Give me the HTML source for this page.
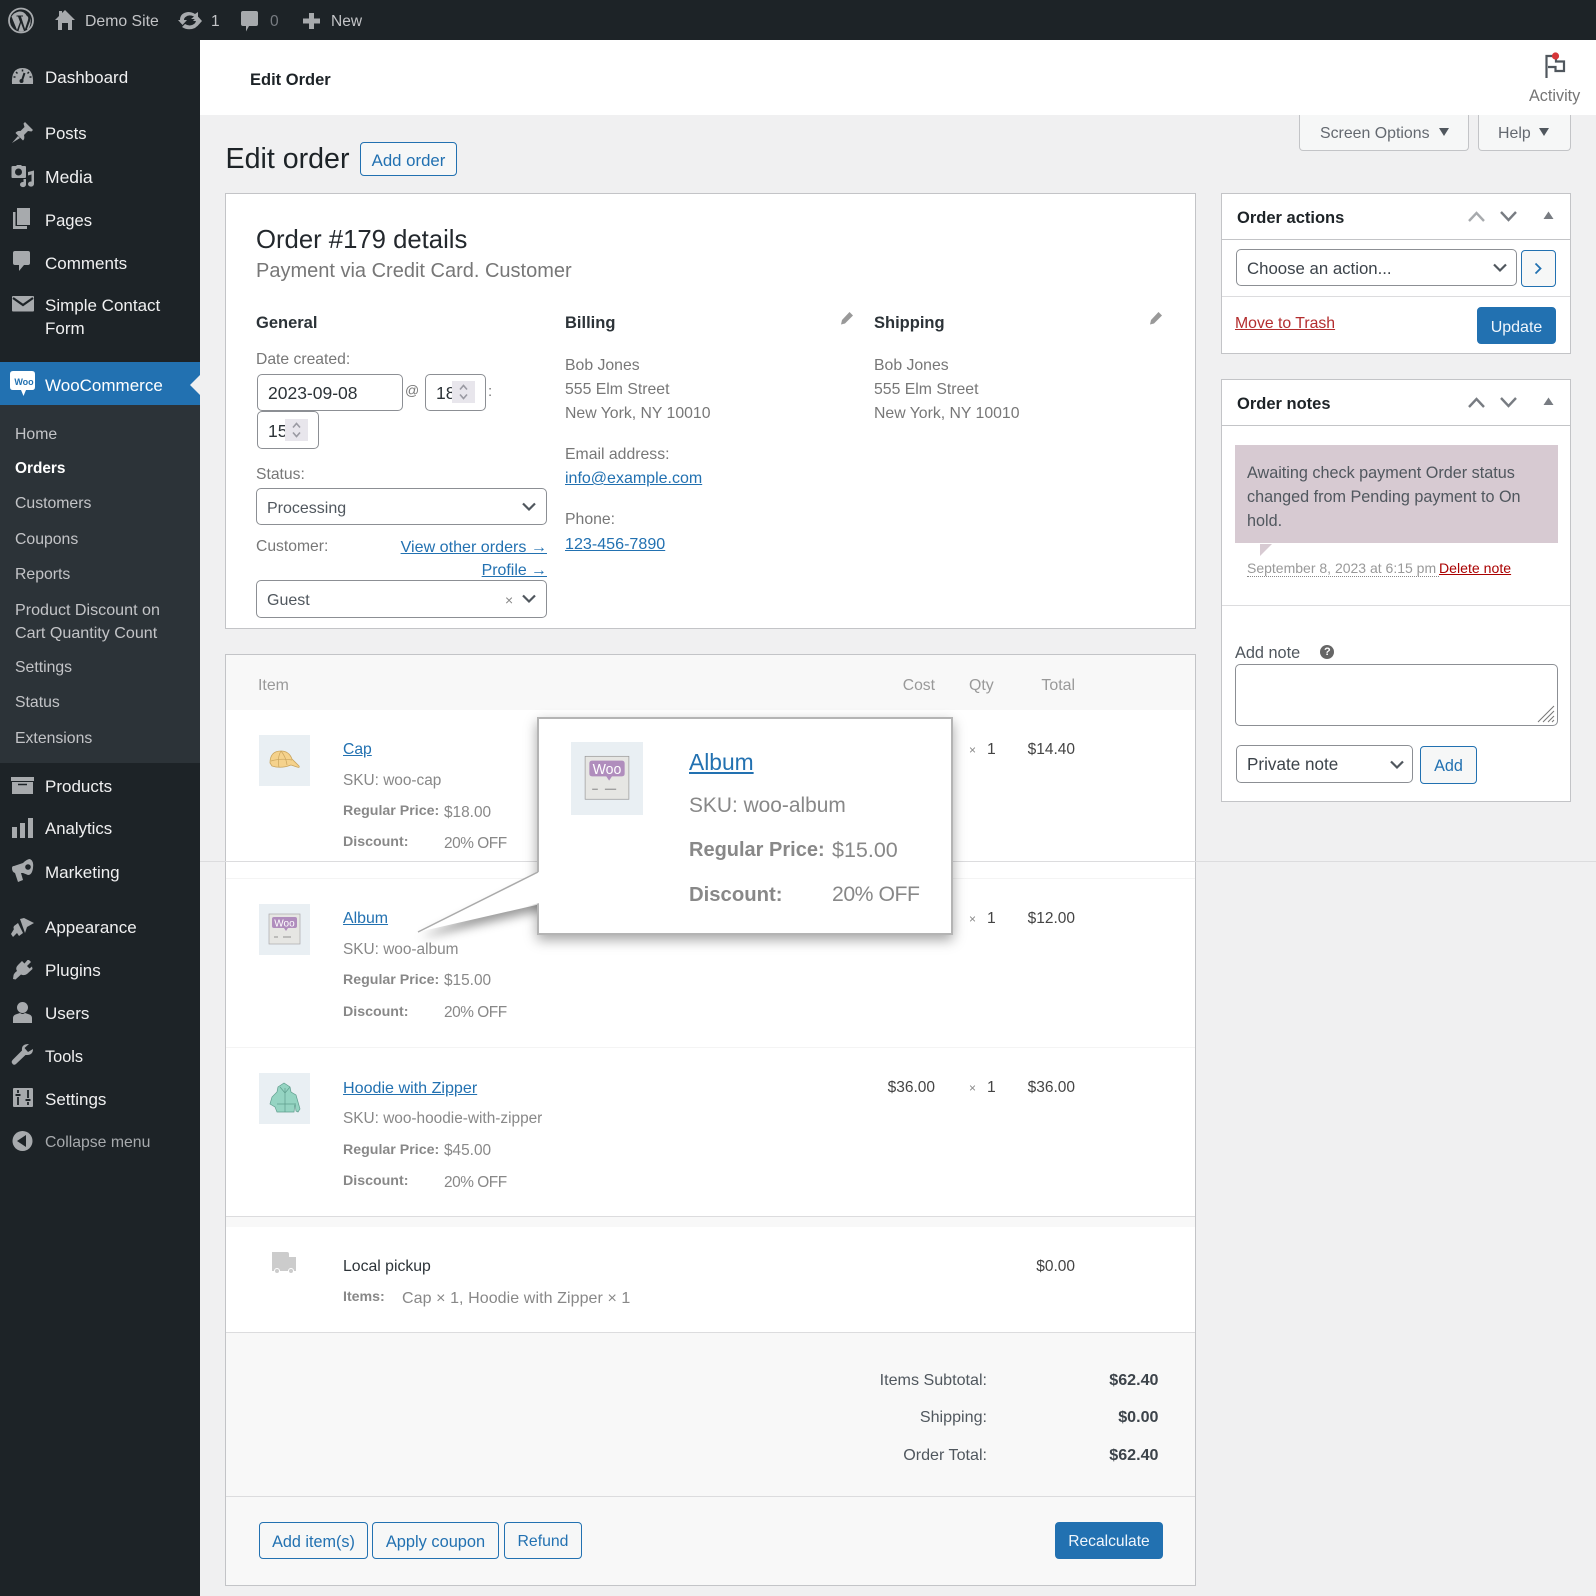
<!DOCTYPE html>
<html lang="en"><head><meta charset="utf-8"><title>Edit Order</title>
<style>
*{box-sizing:border-box}
html,body{margin:0;padding:0}
body{width:1596px;height:1596px;position:relative;overflow:hidden;background:#f0f0f1;font-family:"Liberation Sans",Arial,sans-serif;font-size:16px;color:#50575e}
.b{position:absolute}
.t{position:absolute;white-space:nowrap;line-height:24px;height:24px}
.m{font-size:17px;color:#f0f0f1;left:45px}
.sm{font-size:15.8px;color:#c3c4c7;left:15px}
.g{color:#777}
.lb{color:#888;font-weight:700;font-size:14.2px}
.v{color:#888;font-size:15.4px}
.o{letter-spacing:-.45px}
.h{font-weight:700;color:#2c3338;font-size:16.5px}
a{color:#2271b1;text-decoration:underline}
.inp{position:absolute;background:#fff;border:1px solid #8c8f94;border-radius:5px}
.btn{position:absolute;border:1px solid #2271b1;border-radius:4px;background:#f6f7f7;color:#2271b1;text-align:center;font-size:16.2px;line-height:38px;white-space:nowrap}
.pri{background:#2271b1;color:#f0f6fc}
.line{position:absolute;height:1px;background:#dcdcde}
svg{position:absolute;overflow:visible}
.ch{fill:none;stroke:#50575e;stroke-width:2.2}
</style></head><body>

<!-- admin bar + sidebar -->
<div class="b" style="left:0;top:0;width:1596px;height:40px;background:#1d2327"></div>
<div class="b" style="left:0;top:40px;width:200px;height:1556px;background:#1d2327"></div>
<div class="b" style="left:0;top:405px;width:200px;height:358px;background:#2c3338"></div>
<div class="b" style="left:0;top:362px;width:200px;height:43px;background:#2271b1"></div>

<!-- page header -->
<div class="b" style="left:200px;top:40px;width:1396px;height:75px;background:#fff"></div>

<!-- sidebar and toolbar icons -->
<svg style="left:0;top:0" width="200" height="1200" viewBox="0 0 200 1200" fill="#a7aaad">
<circle cx="21" cy="20.500" r="12" fill="none" stroke="#a7aaad" stroke-width="1.800"/>
<path d="M11.500 16.500 L17 30 L20 22 L18 16.500 H16.500 V15.500 H23 V16.500 H21 L25 29 L28 20 Q29 17 26.500 15.500 Q24 11 19 11.500 Q14 12.500 11.500 16.500 Z M21 23 L18.500 31 Q21 32 24 31 Z M30 18 Q32 23 28 30 L27 29 L30 21 Z"/>
<path d="M65 10 L75 20 L72 20 V30 H68 V23 H62 V30 H58 V20 H55 L59 16 V11 H62 V13 Z"/>
<path d="M180 20 Q180 13 188 12 Q192 12 195 14 L198 12 V19 H191 L194 16.500 Q189 14 185.500 17 Q184 18 184 20 H187 L182.500 25 L178 20 Z M202 21 L197.500 26 Q196 27 195 28 Q188 31 182 27 L185 24 Q190 27 194 24 Q195.500 23 196 21 H193 L197.500 16 Z"/>
<path d="M243 11 H256 Q258 11 258 13 V24 Q258 26 256 26 H249 L246 31.500 V26 H243 Q241 26 241 24 V13 Q241 11 243 11 Z"/>
<path d="M309 13 H314 V18.500 H320 V23.500 H314 V29 H309 V23.500 H303 V18.500 H309 Z"/>
<path d="M12 84 Q11 68 22.500 68 Q34 68 33 84 Z"/><path d="M21.500 82 L24.500 73" stroke="#1d2327" stroke-width="2" fill="none"/><circle cx="21.500" cy="81" r="2" fill="#1d2327"/><path d="M16 72 l1.500 1.500 M29 72 l-1.500 1.500 M22.500 69.500 v2 M13.500 77 h2 M31.500 77 h-2" stroke="#1d2327" stroke-width="1.500"/>
<path d="M25 122 L33 130 L31.500 131.500 L28 131 L24 135 Q25 139 23 140.500 L15.500 133 Q17.500 130.500 20.500 131 L24.500 127 L23.500 123.500 Z M18 136 L12 143 L20 138 Z"/>
<path d="M13 166 H16 L17 165 H21 L22 166 H25 Q26 166 26 167 V177 Q26 178 25 178 H13 Q11.500 178 11.500 177 V167 Q11.500 166 13 166 Z"/><circle cx="18.500" cy="172" r="3.500" fill="#1d2327"/><path d="M28 172 L34 170.500 V184 A3 2.600 0 1 1 31.500 181.500 V174.500 L28 175.500 Z M26 179 V184.500 A3 2.600 0 1 1 23.500 182 V179 Z"/>
<rect x="17" y="208" width="13" height="17"/><path d="M13 212 H15.500 V226 H27 V229 H13 Z"/>
<path d="M15 251 H28 Q30 251 30 253 V263 Q30 265 28 265 H24 L19 271 V265 H15 Q13 265 13 263 V253 Q13 251 15 251 Z"/>
<rect x="12" y="296" width="22" height="15.500" rx="1"/><path d="M13 298 L23 305 L33 298" fill="none" stroke="#1d2327" stroke-width="2.200"/>
<path d="M13 371 H32 Q35 371 35 374 V387 Q35 390 32 390 H26 L23.500 396 L21 390 H13 Q10 390 10 387 V374 Q10 371 13 371 Z" fill="#fff"/>
<path d="M200 375 L190 385 L200 395 Z" fill="#f0f0f1"/>
<path d="M11 777 H34 V781 H11 Z M12 782 H33 V794 H12 Z"/><path d="M18 784.500 H27" stroke="#1d2327" stroke-width="1.500"/>
<rect x="12" y="827" width="5" height="11"/><rect x="20" y="823" width="5" height="15"/><rect x="28" y="818" width="5" height="20"/>
<path d="M12 868 Q12 866 14 866 L23 863 Q27 859 30 859 Q34 861 33 868 Q32 875 28 875 L23 873 L21 873 L23 880 L18 882 L15 873 Q12 872 12 868 Z"/><circle cx="28" cy="867" r="2.800" fill="#1d2327"/>
<path d="M20 919 L24 918 L34 923 L27 927 L25 933 Z M18 923 L23 933 L19 936 L17 933 L13 937 L11 934 L14 929 Q13 928 14 926 Z"/>
<path d="M29 960 L31 962 L27 966 L29.500 968.500 L32 966.500 L32.500 969 L27 974 Q24 976 21 974.500 L15.500 979.500 L13 979 L13.500 975.500 Q14 973 17 971 Q15 968 18 965 L22 961 L24.500 963.500 L27.500 960 Z"/>
<circle cx="22.500" cy="1007.500" r="5.500"/><path d="M13 1023 V1018 Q13 1015 17 1014 L20 1013 Q22.500 1015 25 1013 L28 1014 Q32 1015 32 1018 V1023 Z"/>
<path d="M33 1049 Q33 1055 27 1055 L25.500 1055 L16 1064 Q13.500 1066 12 1063 Q11 1061.500 13 1059.500 L22 1050.500 Q21 1044 29 1044 L24.500 1048 L28 1052 Z"/>
<rect x="13" y="1088" width="20" height="19" rx="1"/><path d="M18 1097 V1105 M18 1090 V1093 M28 1090 V1098 M28 1102 V1105" stroke="#1d2327" stroke-width="1.800"/><path d="M15.500 1095 h5 M25.500 1100 h5" stroke="#1d2327" stroke-width="2"/>
<circle cx="22.500" cy="1141" r="10"/><path d="M26 1135 V1147 L17 1141 Z" fill="#1d2327"/>
</svg>

<!-- toolbar text -->
<div class="t" style="left:85px;top:10px;font-size:15.800px;color:#c3c4c7">Demo Site</div>
<div class="t" style="left:211px;top:10px;font-size:15.500px;color:#c3c4c7">1</div>
<div class="t" style="left:270px;top:10px;font-size:15.500px;color:#787c82">0</div>
<div class="t" style="left:331px;top:10px;font-size:15.500px;color:#c3c4c7">New</div>

<!-- main menu -->
<div class="t m" style="top:66px">Dashboard</div>
<div class="t m" style="top:122px;font-size:16.600px">Posts</div>
<div class="t m" style="top:165px;font-size:17.500px">Media</div>
<div class="t m" style="top:209px;font-size:16.600px">Pages</div>
<div class="t m" style="top:252px">Comments</div>
<div class="t m" style="top:294px">Simple Contact</div>
<div class="t m" style="top:317px">Form</div>
<div class="t m" style="top:374px;color:#fff">WooCommerce</div>
<div class="t" style="left:13px;top:370px;width:22px;text-align:center;font-size:9px;font-weight:700;color:#2271b1">Woo</div>
<div class="t sm" style="top:423px">Home</div>
<div class="t sm" style="top:457px;color:#fff;font-weight:700;font-size:15.400px">Orders</div>
<div class="t sm" style="top:492px">Customers</div>
<div class="t sm" style="top:528px">Coupons</div>
<div class="t sm" style="top:563px">Reports</div>
<div class="t sm" style="top:598px;font-size:16.100px">Product Discount on</div>
<div class="t sm" style="top:621px;font-size:16.100px">Cart Quantity Count</div>
<div class="t sm" style="top:656px">Settings</div>
<div class="t sm" style="top:691px">Status</div>
<div class="t sm" style="top:727px">Extensions</div>
<div class="t m" style="top:775px">Products</div>
<div class="t m" style="top:817px;font-size:16.800px">Analytics</div>
<div class="t m" style="top:861px">Marketing</div>
<div class="t m" style="top:916px">Appearance</div>
<div class="t m" style="top:959px">Plugins</div>
<div class="t m" style="top:1002px">Users</div>
<div class="t m" style="top:1045px;font-size:16.300px">Tools</div>
<div class="t m" style="top:1088px">Settings</div>
<div class="t" style="left:45px;top:1131px;font-size:15.800px;color:#a7aaad">Collapse menu</div>

<!-- header -->
<div class="t" style="left:250px;top:68px;font-size:16.500px;font-weight:700;color:#1d2327">Edit Order</div>
<svg style="left:1540px;top:48px" width="34" height="34" viewBox="0 0 34 34"><path d="M6.500 30 V8 H16 V13.500 H24 V23 H15.500 V19 H8" fill="none" stroke="#50575e" stroke-width="2.200"/><circle cx="15.500" cy="8" r="3.600" fill="#d63638"/></svg>
<div class="t" style="left:1529px;top:84px;font-size:16.200px;color:#757575">Activity</div>

<!-- screen tabs -->
<div class="b" style="left:1299px;top:115px;width:170px;height:36px;background:#f6f7f7;border:1px solid #c3c4c7;border-top:0;border-radius:0 0 4px 4px"></div>
<div class="b" style="left:1478px;top:115px;width:93px;height:36px;background:#f6f7f7;border:1px solid #c3c4c7;border-top:0;border-radius:0 0 4px 4px"></div>
<div class="t" style="left:1320px;top:122px;font-size:15.900px;color:#646970">Screen Options</div>
<div class="t" style="left:1498px;top:122px;font-size:15.900px;color:#646970">Help</div>
<svg style="left:1438px;top:127px" width="12" height="10"><path d="M1 1 H11 L6 9 Z" fill="#50575e"/></svg>
<svg style="left:1538px;top:127px" width="12" height="10"><path d="M1 1 H11 L6 9 Z" fill="#50575e"/></svg>

<div class="t" style="left:225.500px;top:147px;font-size:28.600px;color:#1d2327">Edit order</div>
<div class="btn" style="left:360px;top:142px;width:97px;height:34px;line-height:36px;font-size:16.800px">Add order</div>

<!-- order details panel -->
<div class="b" style="left:225px;top:193px;width:971px;height:436px;background:#fff;border:1px solid #c3c4c7"></div>
<div class="t" style="left:256px;top:227.500px;font-size:25.700px;color:#23282d">Order #179 details</div>
<div class="t" style="left:256px;top:259px;font-size:20px;color:#777">Payment via Credit Card. Customer</div>

<div class="t h" style="left:256px;top:311px">General</div>
<div class="t g" style="left:256px;top:348px;font-size:15.700px">Date created:</div>
<div class="inp" style="left:257px;top:374px;width:146px;height:37px"></div>
<div class="t" style="left:268px;top:381px;font-size:17.500px;color:#2c3338">2023-09-08</div>
<div class="t g" style="left:405px;top:378px;font-size:14px">@</div>
<div class="inp" style="left:425px;top:374px;width:61px;height:37px"></div>
<div class="t" style="left:436px;top:381px;font-size:17.500px;color:#2c3338">18</div>
<div class="b" style="left:452px;top:381px;width:23px;height:22px;background:#e8e6ec"></div>
<svg style="left:452px;top:381px" width="23" height="22" fill="none" stroke="#9a9aa2" stroke-width="1.600"><path d="M8 8.500 L11.500 4.500 L15 8.500 M8 13.500 L11.500 17.500 L15 13.500"/></svg>
<div class="t g" style="left:488px;top:380px;font-size:15px">:</div>
<div class="inp" style="left:257px;top:411px;width:62px;height:38px"></div>
<div class="t" style="left:268px;top:419px;font-size:17.500px;color:#2c3338">15</div>
<div class="b" style="left:285px;top:419px;width:23px;height:22px;background:#e8e6ec"></div>
<svg style="left:285px;top:419px" width="23" height="22" fill="none" stroke="#9a9aa2" stroke-width="1.600"><path d="M8 8.500 L11.500 4.500 L15 8.500 M8 13.500 L11.500 17.500 L15 13.500"/></svg>
<div class="t g" style="left:256px;top:463px;font-size:15.700px">Status:</div>
<div class="inp" style="left:256px;top:488px;width:291px;height:37px"></div>
<div class="t" style="left:267px;top:497px;font-size:16px;color:#50575e">Processing</div>
<svg style="left:522px;top:502px" width="14" height="10"><path class="ch" d="M1 1.500 L7 7.500 L13 1.500"/></svg>
<div class="t g" style="left:256px;top:535px;font-size:15.700px">Customer:</div>
<div class="t" style="right:1049px;top:535px;font-size:16.100px"><a>View other orders →</a></div>
<div class="t" style="right:1049px;top:559px;font-size:15.900px"><a>Profile →</a></div>
<div class="inp" style="left:256px;top:580px;width:291px;height:38px"></div>
<div class="t" style="left:267px;top:589px;font-size:16px;color:#50575e">Guest</div>
<div class="t" style="left:505px;top:588px;font-size:14px;color:#888">×</div>
<svg style="left:522px;top:594px" width="14" height="10"><path class="ch" d="M1 1.500 L7 7.500 L13 1.500"/></svg>

<div class="t h" style="left:565px;top:311px">Billing</div>
<svg style="left:840px;top:311px" width="14" height="14" fill="#999"><path d="M9.500 1 L13 4.500 L5 12.500 L1 13.500 L2 9 Z"/></svg>
<div class="t g" style="left:565px;top:354px;font-size:15.800px">Bob Jones</div>
<div class="t g" style="left:565px;top:378px;font-size:15.800px">555 Elm Street</div>
<div class="t g" style="left:565px;top:402px;font-size:15.800px">New York, NY 10010</div>
<div class="t" style="left:565px;top:443px;font-size:15.800px;color:#777">Email address:</div>
<div class="t" style="left:565px;top:467px;font-size:16px"><a>info@example.com</a></div>
<div class="t" style="left:565px;top:508px;font-size:15.800px;color:#777">Phone:</div>
<div class="t" style="left:565px;top:532px;font-size:16.100px"><a>123-456-7890</a></div>

<div class="t h" style="left:874px;top:311px">Shipping</div>
<svg style="left:1149px;top:311px" width="14" height="14" fill="#999"><path d="M9.500 1 L13 4.500 L5 12.500 L1 13.500 L2 9 Z"/></svg>
<div class="t g" style="left:874px;top:354px;font-size:15.800px">Bob Jones</div>
<div class="t g" style="left:874px;top:378px;font-size:15.800px">555 Elm Street</div>
<div class="t g" style="left:874px;top:402px;font-size:15.800px">New York, NY 10010</div>

<!-- items panel -->
<div class="b" style="left:225px;top:654px;width:971px;height:932px;background:#fff;border:1px solid #c3c4c7"></div>
<div class="b" style="left:226px;top:655px;width:969px;height:55px;background:#f8f8f8"></div>
<div class="t" style="left:258px;top:674px;font-size:15.900px;color:#999">Item</div>
<div class="t" style="right:661px;top:674px;font-size:15.700px;color:#999">Cost</div>
<div class="t" style="left:969px;top:674px;font-size:15.900px;color:#999">Qty</div>
<div class="t" style="right:521px;top:674px;font-size:15.900px;color:#999">Total</div>

<div class="line" style="left:200px;top:861px;width:1396px"></div>
<div class="line" style="left:226px;top:878px;width:969px;background:#f4f4f4"></div>
<div class="line" style="left:226px;top:1047px;width:969px;background:#f4f4f4"></div>

<!-- thumbnails -->
<svg style="left:259px;top:735px" width="51" height="51" viewBox="0 0 51 51"><rect width="51" height="51" fill="#e9eff3"/><path d="M11 28 Q11 16 22 16 Q30 16 33 24 L40 31 Q41 33 38 32 L32 30 Q22 34 13 31 Z" fill="#f5d28c" stroke="#c9a45c" stroke-width=".8"/><path d="M22 16 Q18 23 20 32 M22 16 Q27 22 28 30 M12 26 Q22 23 33 25" fill="none" stroke="#c9a45c" stroke-width=".7"/></svg>
<svg style="left:259px;top:904px" width="51" height="51" viewBox="0 0 51 51"><rect width="51" height="51" fill="#e9eff3"/><rect x="10" y="10" width="31" height="30" fill="#e6e6e3" stroke="#aaa" stroke-width=".7"/><path d="M15 13 H36 Q38 13 38 15 V22 Q38 24 36 24 H29 L27 27 L25 24 H15 Q13 24 13 22 V15 Q13 13 15 13 Z" fill="#b08dbd"/><text x="25.500" y="22.500" text-anchor="middle" font-family="Liberation Sans,sans-serif" font-size="10" fill="#fff">Woo</text><path d="M15 33 h4 M24 33 h8" stroke="#777" stroke-width=".8"/></svg>
<svg style="left:259px;top:1073px" width="51" height="51" viewBox="0 0 51 51"><rect width="51" height="51" fill="#e9eff3"/><path d="M25 10 L31 14 L32 19 L37 22 L41 36 L39 39 L37 38 L36 30 L35 39 H18 L16 34 L11 31 L13 24 L18 19 L19 14 Z" fill="#95d4c2" stroke="#5f9d8d" stroke-width=".7"/><path d="M26 15 V39 M21 14 L26 20 L31 14 M18 31 H35" fill="none" stroke="#5f9d8d" stroke-width=".7"/></svg>
<svg style="left:571px;top:742px;z-index:7" width="72" height="73" viewBox="0 0 51 51" preserveAspectRatio="none"><rect width="51" height="51" fill="#e9eff3"/><rect x="10" y="10" width="31" height="30" fill="#e6e6e3" stroke="#999" stroke-width=".5"/><path d="M15 13 H36 Q38 13 38 15 V22 Q38 24 36 24 H29 L27 27 L25 24 H15 Q13 24 13 22 V15 Q13 13 15 13 Z" fill="#b08dbd"/><text x="25.500" y="22.500" text-anchor="middle" font-family="Liberation Sans,sans-serif" font-size="10" fill="#fff">Woo</text><path d="M15 33 h4 M24 33 h8" stroke="#777" stroke-width=".6"/></svg>

<!-- item rows -->
<div class="t" style="left:343px;top:738px;font-size:15.700px"><a>Cap</a></div>
<div class="t v" style="left:343px;top:769px">SKU: woo-cap</div>
<div class="t lb" style="left:343px;top:799px">Regular Price:</div><div class="t v" style="left:444px;top:801px">$18.00</div>
<div class="t lb" style="left:343px;top:830px">Discount:</div><div class="t v o" style="left:444px;top:832px">20% OFF</div>
<div class="t" style="left:343px;top:907px;font-size:15.900px"><a>Album</a></div>
<div class="t v" style="left:343px;top:938px">SKU: woo-album</div>
<div class="t lb" style="left:343px;top:968px">Regular Price:</div><div class="t v" style="left:444px;top:969px">$15.00</div>
<div class="t lb" style="left:343px;top:1000px">Discount:</div><div class="t v o" style="left:444px;top:1001px">20% OFF</div>
<div class="t" style="left:343px;top:1076px;font-size:16.100px"><a>Hoodie with Zipper</a></div>
<div class="t v" style="left:343px;top:1107px">SKU: woo-hoodie-with-zipper</div>
<div class="t lb" style="left:343px;top:1138px">Regular Price:</div><div class="t v" style="left:444px;top:1139px">$45.00</div>
<div class="t lb" style="left:343px;top:1169px">Discount:</div><div class="t v o" style="left:444px;top:1171px">20% OFF</div>

<div class="t" style="left:969px;top:738px;font-size:12px;color:#888">×</div><div class="t" style="left:987px;top:738px;font-size:15.700px;color:#444">1</div><div class="t" style="right:521px;top:738px;font-size:15.500px;color:#444">$14.40</div>
<div class="t" style="left:969px;top:907px;font-size:12px;color:#888">×</div><div class="t" style="left:987px;top:907px;font-size:15.700px;color:#444">1</div><div class="t" style="right:521px;top:907px;font-size:15.500px;color:#444">$12.00</div>
<div class="t" style="right:661px;top:1076px;font-size:15.500px;color:#444">$36.00</div><div class="t" style="left:969px;top:1076px;font-size:12px;color:#888">×</div><div class="t" style="left:987px;top:1076px;font-size:15.700px;color:#444">1</div><div class="t" style="right:521px;top:1076px;font-size:15.500px;color:#444">$36.00</div>

<!-- shipping row -->
<div class="line" style="left:226px;top:1216px;width:969px"></div>
<div class="b" style="left:226px;top:1217px;width:969px;height:10px;background:#f8f8f8"></div>
<svg style="left:272px;top:1252px" width="25" height="22" fill="#ccc"><path d="M0 0 H15 Q17 0 17 2 V5 H24 V19 H0 Z"/><circle cx="5" cy="19" r="2.500" stroke="#fff"/><circle cx="19" cy="19" r="2.500" stroke="#fff"/></svg>
<div class="t" style="left:343px;top:1255px;font-size:15.800px;color:#2c3338">Local pickup</div>
<div class="t lb" style="left:343px;top:1285px">Items:</div>
<div class="t v" style="left:402px;top:1287px;font-size:16px;letter-spacing:.08px">Cap × 1, Hoodie with Zipper × 1</div>
<div class="t" style="right:521px;top:1255px;font-size:15.500px;color:#444">$0.00</div>

<!-- totals -->
<div class="line" style="left:226px;top:1332px;width:969px"></div>
<div class="b" style="left:226px;top:1333px;width:969px;height:252px;background:#f8f8f8"></div>
<div class="t" style="right:609px;top:1368px;font-size:16.100px;color:#50575e">Items Subtotal:</div>
<div class="t" style="right:609px;top:1405px;font-size:16.100px;color:#50575e">Shipping:</div>
<div class="t" style="right:609px;top:1443px;font-size:16.100px;color:#50575e">Order Total:</div>
<div class="t" style="right:437.500px;top:1368px;font-size:16.100px;font-weight:700;color:#3c434a">$62.40</div>
<div class="t" style="right:437.500px;top:1405px;font-size:16.100px;font-weight:700;color:#3c434a">$0.00</div>
<div class="t" style="right:437.500px;top:1443px;font-size:16.100px;font-weight:700;color:#3c434a">$62.40</div>
<div class="line" style="left:226px;top:1496px;width:969px"></div>
<div class="btn" style="left:259px;top:1522px;width:109px;height:37px">Add item(s)</div>
<div class="btn" style="left:372px;top:1522px;width:127px;height:37px;font-size:16.400px">Apply coupon</div>
<div class="btn" style="left:504px;top:1522px;width:78px;height:37px;font-size:15.800px">Refund</div>
<div class="btn pri" style="left:1055px;top:1522px;width:108px;height:37px;font-size:15.600px">Recalculate</div>

<!-- popup tail + popup -->
<svg style="left:0;top:0;z-index:4;filter:drop-shadow(2px 6px 5px rgba(0,0,0,.4))" width="1" height="1"><path d="M545 871 L418 932 L545 903 Z" fill="#fff"/></svg>
<div class="b" style="left:537px;top:717px;width:416px;height:218px;background:#fff;border:2px solid #b4b4b4;box-shadow:0 5px 12px rgba(0,0,0,.35);z-index:5"></div>
<svg style="left:0;top:0;z-index:6" width="1" height="1"><path d="M539.500 871.500 L418 932 L539.500 903 Z" fill="#fff"/><path d="M538 872 L418 932" stroke="#aaa" stroke-width="1.500" fill="none"/></svg>
<div class="t" style="left:689px;top:750px;font-size:22.800px;z-index:7"><a>Album</a></div>
<div class="t" style="left:689px;top:794px;font-size:20.900px;color:#888;z-index:7">SKU: woo-album</div>
<div class="t" style="left:689px;top:838px;font-size:20px;font-weight:700;color:#888;z-index:7">Regular Price:</div>
<div class="t" style="left:832px;top:838px;font-size:21.500px;color:#888;z-index:7">$15.00</div>
<div class="t" style="left:689px;top:883px;font-size:20.300px;font-weight:700;color:#888;z-index:7">Discount:</div>
<div class="t o" style="left:832px;top:883px;font-size:21.200px;color:#888;z-index:7">20% OFF</div>

<!-- order actions -->
<div class="b" style="left:1221px;top:193px;width:350px;height:161px;background:#fff;border:1px solid #c3c4c7"></div>
<div class="line" style="left:1222px;top:239px;width:348px;background:#c3c4c7"></div>
<div class="t h" style="left:1237px;top:206px;color:#1d2327">Order actions</div>
<svg style="left:1468px;top:211px" width="17" height="11"><path d="M1 10 L8.500 2 L16 10" fill="none" stroke="#a7aaad" stroke-width="2.400"/></svg>
<svg style="left:1500px;top:211px" width="17" height="11"><path d="M1 1 L8.500 9 L16 1" fill="none" stroke="#787c82" stroke-width="2.400"/></svg>
<svg style="left:1543px;top:211px" width="11" height="9"><path d="M0.500 8 H10.500 L5.500 0.500 Z" fill="#787c82"/></svg>
<div class="inp" style="left:1236px;top:249px;width:281px;height:37px"></div>
<div class="t" style="left:1247px;top:257px;font-size:16.800px;color:#3c434a">Choose an action...</div>
<svg style="left:1493px;top:263px" width="14" height="10"><path class="ch" d="M1 1.500 L7 7.500 L13 1.500"/></svg>
<div class="btn" style="left:1521px;top:250px;width:35px;height:37px"></div>
<svg style="left:1534px;top:262px" width="9" height="13"><path d="M1.500 1.500 L6.500 6.500 L1.500 11.500" fill="none" stroke="#2271b1" stroke-width="1.800"/></svg>
<div class="line" style="left:1222px;top:296px;width:348px"></div>
<div class="t" style="left:1235px;top:312px;font-size:15.800px"><a style="color:#b32d2e">Move to Trash</a></div>
<div class="btn pri" style="left:1477px;top:307px;width:79px;height:37px;line-height:39px;font-size:16px">Update</div>

<!-- order notes -->
<div class="b" style="left:1221px;top:379px;width:350px;height:423px;background:#fff;border:1px solid #c3c4c7"></div>
<div class="line" style="left:1222px;top:425px;width:348px;background:#c3c4c7"></div>
<div class="t h" style="left:1237px;top:392px;color:#1d2327">Order notes</div>
<svg style="left:1468px;top:397px" width="17" height="11"><path d="M1 10 L8.500 2 L16 10" fill="none" stroke="#787c82" stroke-width="2.400"/></svg>
<svg style="left:1500px;top:397px" width="17" height="11"><path d="M1 1 L8.500 9 L16 1" fill="none" stroke="#787c82" stroke-width="2.400"/></svg>
<svg style="left:1543px;top:397px" width="11" height="9"><path d="M0.500 8 H10.500 L5.500 0.500 Z" fill="#787c82"/></svg>
<div class="b" style="left:1235px;top:445px;width:323px;height:98px;background:#d7cad2"></div>
<div class="t" style="left:1247px;top:461px;font-size:16.200px;color:#50575e">Awaiting check payment Order status</div>
<div class="t" style="left:1247px;top:485px;font-size:16.200px;color:#50575e">changed from Pending payment to On</div>
<div class="t" style="left:1247px;top:509px;font-size:16.200px;color:#50575e">hold.</div>
<svg style="left:1260px;top:544px" width="13" height="13"><path d="M0 0 H12 L0 12 Z" fill="#d7cad2"/></svg>
<div class="t" style="left:1247px;top:556px;font-size:14px;color:#999;width:192px"><span style="display:inline-block;width:192px;height:21px;border-bottom:1px dotted #888">September 8, 2023 at 6:15 pm</span></div>
<div class="t" style="left:1439px;top:556px;font-size:14.100px"><a style="color:#a00">Delete note</a></div>
<div class="line" style="left:1222px;top:605px;width:348px"></div>
<div class="t" style="left:1235px;top:640.500px;font-size:16.300px;color:#50575e">Add note</div>
<svg style="left:1320px;top:645px" width="14" height="14"><circle cx="7" cy="7" r="7" fill="#666"/></svg>
<div class="t" style="left:1324px;top:640px;font-size:11px;font-weight:700;color:#fff">?</div>
<div class="inp" style="left:1235px;top:664px;width:323px;height:62px"></div>
<svg style="left:1537px;top:705px" width="18" height="18" fill="none" stroke="#777" stroke-width="1"><path d="M1 17 L17 1 M6 17 L17 6 M11 17 L17 11 M15 17 L17 15"/></svg>
<div class="inp" style="left:1236px;top:745px;width:177px;height:38px"></div>
<div class="t" style="left:1247px;top:753px;font-size:17.100px;color:#3c434a">Private note</div>
<svg style="left:1390px;top:760px" width="14" height="10"><path class="ch" d="M1 1.500 L7 7.500 L13 1.500"/></svg>
<div class="btn" style="left:1420px;top:746px;width:57px;height:38px;line-height:39px">Add</div>

</body></html>
